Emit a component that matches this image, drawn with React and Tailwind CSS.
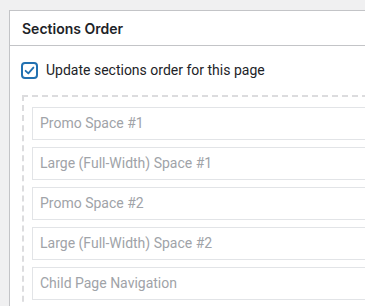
export default function App() {
  const items = [
    "Promo Space #1",
    "Large (Full-Width) Space #1",
    "Promo Space #2",
    "Large (Full-Width) Space #2",
    "Child Page Navigation",
    "",
  ];
  return (
    <div
      className="w-[365px] h-[306px] overflow-hidden bg-[#f0f0f1] pt-[10px] pl-[9px]"
      style={{ fontFamily: "Roboto, 'Noto Sans', sans-serif" }}
    >
      <div className="w-[420px] h-[400px] bg-white border border-[#c3c4c7]">
        <div className="h-[35px] border-b border-[#c3c4c7] pl-[12px] flex items-center">
          <h2
            className="text-[14px] font-semibold text-[#1d2327]"
            style={{ fontFamily: "Inter, 'Noto Sans', sans-serif" }}
          >
            Sections Order
          </h2>
        </div>
        <div className="pt-[16px] pl-[11px]">
          <label className="flex items-center gap-[8px] h-[17px]">
            <span className="w-[17px] h-[17px] rounded-[4px] border-2 border-[#2271b1] flex items-center justify-center bg-white">
              <svg viewBox="0 0 20 20" className="w-[15px] h-[15px]">
                <path d="M4 10.5 L8.2 14.5 L16 5.5" fill="none" stroke="#2271b1" strokeWidth="2.8" strokeLinecap="round" strokeLinejoin="round" />
              </svg>
            </span>
            <span className="text-[14px] text-[#1d2327]">Update sections order for this page</span>
          </label>
          <div className="mt-[16px] ml-[1px] border-2 border-dashed border-[#dcdcde] pt-[10px] pl-[8px] flex flex-col gap-[7px]">
            {items.map((t, i) => (
              <div
                key={i}
                className="h-[33px] border border-[#e2e4e7] flex items-center pl-[7px] text-[14px] text-[#a0a3a8]"
              >
                {t}
              </div>
            ))}
          </div>
        </div>
      </div>
    </div>
  );
}
